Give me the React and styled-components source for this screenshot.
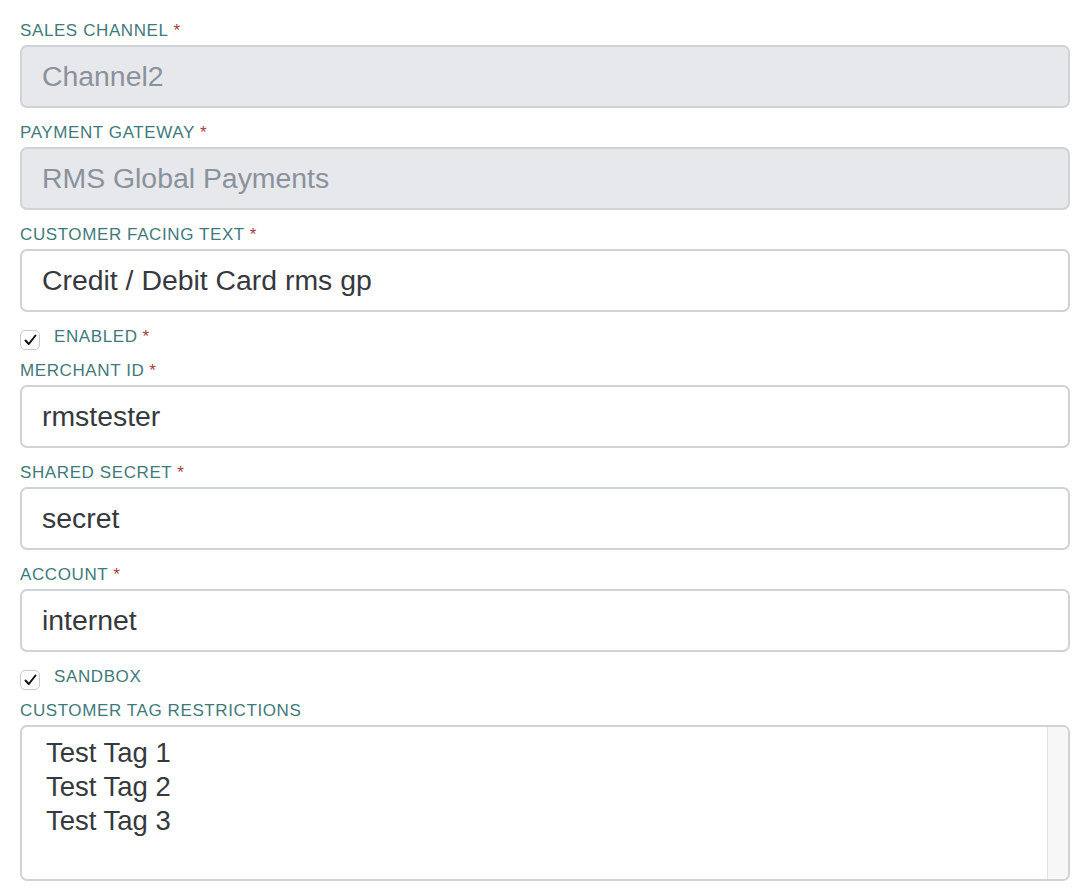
import React from 'react'
import styled, { createGlobalStyle } from 'styled-components'

const GlobalStyle = createGlobalStyle`
  body {
    margin: 0;
    background: #fff;
    font-family: 'Liberation Sans', Arial, sans-serif;
  }
`

const Form = styled.div`
  width: 1050px;
  padding: 17px 22px 0 20px;
`

const Field = styled.div`
  margin-bottom: 11px;
`

const Label = styled.div`
  font-size: 17px;
  line-height: 24px;
  letter-spacing: 0.6px;
  color: #3f7a7b;
  text-transform: uppercase;
  padding-top: 2px;
  margin-bottom: 2px;
`

const Required = styled.span`
  color: #a5403d;
  margin-left: 5px;
`

const Input = styled.div`
  box-sizing: border-box;
  height: 63px;
  border: 2px solid #cfd2d7;
  border-radius: 7px;
  background: ${(props) => (props.disabled ? '#e7e8ec' : '#fff')};
  color: ${(props) => (props.disabled ? '#8a929c' : '#36393e')};
  font-size: 28.4px;
  display: flex;
  align-items: center;
  padding: 0 20px;
`

const CheckRow = styled.div`
  display: flex;
  align-items: flex-start;
  height: 34px;
`

const Box = styled.span`
  box-sizing: border-box;
  width: 20px;
  height: 20px;
  margin-top: 7px;
  border: 1.5px solid #c9c9c9;
  border-radius: 5px;
  background: #fff;
  display: flex;
  align-items: center;
  justify-content: center;
`

const CheckLabel = styled(Label)`
  margin: 0 0 0 14px;
`

const ListBox = styled.div`
  box-sizing: border-box;
  height: 156px;
  border: 2px solid #cfd2d7;
  border-radius: 7px;
  overflow: hidden;
  display: flex;
`

const Options = styled.div`
  flex: 1;
  padding: 9px 24px;
  font-size: 27.5px;
  line-height: 34px;
  color: #36393e;
`

const Track = styled.div`
  width: 20px;
  background: #f7f7f7;
  border-left: 1px solid #e2e2e2;
`

const fields = [
  { label: 'Sales Channel', value: 'Channel2', disabled: true, required: true },
  { label: 'Payment Gateway', value: 'RMS Global Payments', disabled: true, required: true },
  { label: 'Customer Facing Text', value: 'Credit / Debit Card rms gp', required: true },
  { check: 'Enabled', required: true },
  { label: 'Merchant ID', value: 'rmstester', required: true },
  { label: 'Shared Secret', value: 'secret', required: true },
  { label: 'Account', value: 'internet', required: true },
  { check: 'Sandbox' },
]

const Check = () => (
  <Box>
    <svg width="13" height="12" viewBox="0 0 13 12">
      <path d="M1.5 6.5 L4.8 10 L11.5 1.5" fill="none" stroke="#111" strokeWidth="2" strokeLinecap="round" strokeLinejoin="round" />
    </svg>
  </Box>
)

const App = () => (
  <>
    <GlobalStyle />
    <Form>
      {fields.map((f, i) =>
        f.check ? (
          <CheckRow key={i}>
            <Check />
            <CheckLabel>
              {f.check}
              {f.required && <Required>*</Required>}
            </CheckLabel>
          </CheckRow>
        ) : (
          <Field key={i}>
            <Label>
              {f.label}
              {f.required && <Required>*</Required>}
            </Label>
            <Input disabled={f.disabled}>{f.value}</Input>
          </Field>
        )
      )}
      <Label>Customer Tag Restrictions</Label>
      <ListBox>
        <Options>
          <div>Test Tag 1</div>
          <div>Test Tag 2</div>
          <div>Test Tag 3</div>
        </Options>
        <Track />
      </ListBox>
    </Form>
  </>
)

export default App
